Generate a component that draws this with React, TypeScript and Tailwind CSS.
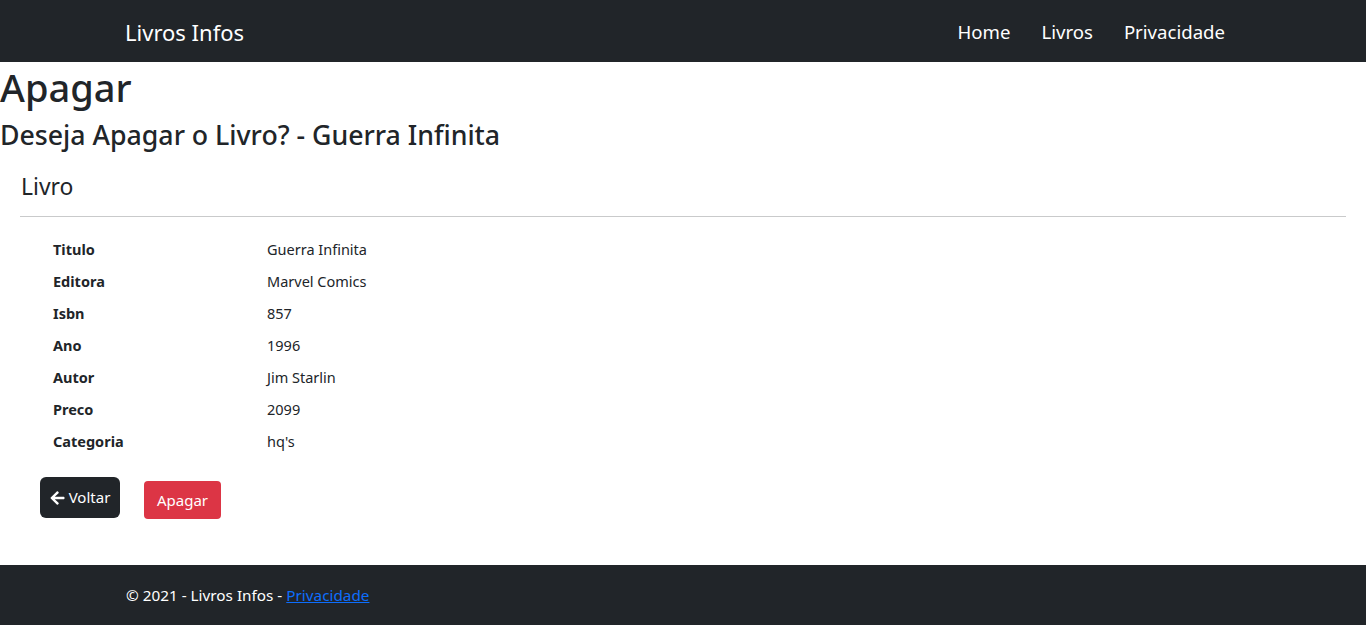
import React from "react";

const livro = [
  { label: "Titulo", value: "Guerra Infinita" },
  { label: "Editora", value: "Marvel Comics" },
  { label: "Isbn", value: "857" },
  { label: "Ano", value: "1996" },
  { label: "Autor", value: "Jim Starlin" },
  { label: "Preco", value: "2099" },
  { label: "Categoria", value: "hq's" },
];

const ArrowLeft = () => (
  <svg width="15" height="16" viewBox="0 0 448 512" fill="currentColor">
    <path d="M257.5 445.1l-22.2 22.2c-9.4 9.4-24.6 9.4-33.9 0L7 273c-9.4-9.4-9.4-24.6 0-33.9L201.4 44.7c9.4-9.4 24.6-9.4 33.9 0l22.2 22.2c9.5 9.5 9.3 25-.4 34.3L136.6 216H424c13.3 0 24 10.7 24 24v32c0 13.3-10.7 24-24 24H136.6l120.5 114.8c9.8 9.3 10 24.8.4 34.3z" />
  </svg>
);

const App = () => {
  return (
    <div
      className="min-h-[625px] flex flex-col bg-white text-[#212529]"
      style={{ fontFamily: "'Noto Sans', 'Open Sans', sans-serif" }}
    >
      <nav className="h-[62px] bg-[#212529] shrink-0">
        <div className="w-[1140px] h-full mx-auto px-3 flex items-center justify-between">
          <span className="text-white text-[22px] leading-[30px] pt-[2px]">Livros Infos</span>
          <ul className="flex items-center gap-[31px] pr-[16px] pt-[2px] text-white text-[18.6px]">
            <li>Home</li>
            <li>Livros</li>
            <li>Privacidade</li>
          </ul>
        </div>
      </nav>

      <main className="flex-1">
        <h1 className="text-[38px] leading-[48px] font-medium mb-2 pt-px">Apagar</h1>
        <h2 className="text-[26.7px] leading-[34px] font-medium -mt-px">
          Deseja Apagar o Livro? - Guerra Infinita
        </h2>

        <div className="px-5 mt-5">
          <h4 className="text-[22.9px] leading-[29px] pl-px">Livro</h4>
          <hr className="mt-[15px] mb-5 border-0 h-px bg-[#c9cacb]" />
          <dl className="pl-[33px] text-[14.5px]">
            {livro.map((item) => (
              <div key={item.label} className="flex leading-6 mb-2">
                <dt className="w-[214px] font-bold">{item.label}</dt>
                <dd>{item.value}</dd>
              </div>
            ))}
          </dl>

          <div className="flex items-end gap-6 pl-5 mt-[24px]">
            <a className="h-[41px] w-[80px] mb-px flex items-center justify-center gap-[4px] bg-[#212529] text-white text-[15px] rounded-[6px]">
              <ArrowLeft />
              Voltar
            </a>
            <button className="h-[38px] w-[77px] bg-[#dc3545] text-white text-[15px] rounded-[4px] pt-px">
              Apagar
            </button>
          </div>
        </div>
      </main>

      <footer className="h-[60px] bg-[#212529] shrink-0">
        <div className="w-[1140px] h-full mx-auto pl-[13px] pt-px flex items-center text-white text-[15.3px]">
          <span>
            © 2021 - Livros Infos -{" "}
            <a className="text-[#0d6efd] underline">Privacidade</a>
          </span>
        </div>
      </footer>
    </div>
  );
};

export default App;
